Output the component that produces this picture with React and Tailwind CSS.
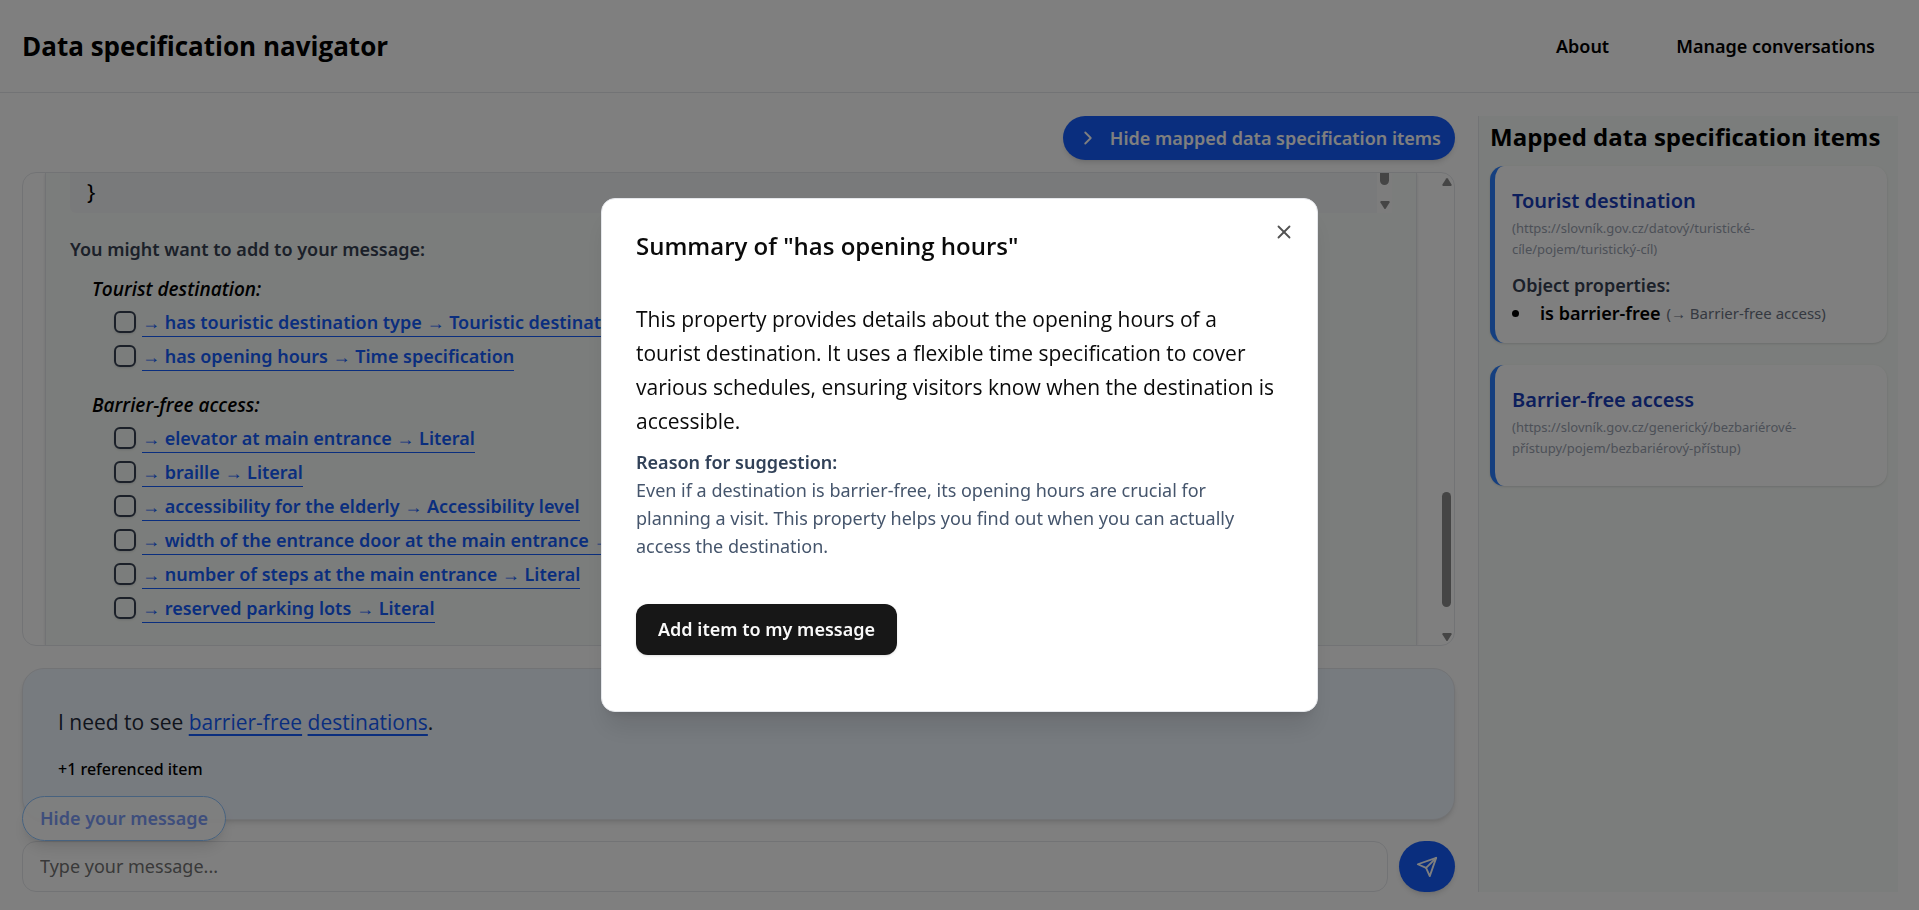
import { ChevronRight, X } from "lucide-react";

const groups = [
  {
    name: "Tourist destination:",
    items: [
      "→ has touristic destination type → Touristic destination type",
      "→ has opening hours → Time specification",
    ],
  },
  {
    name: "Barrier-free access:",
    items: [
      "→ elevator at main entrance → Literal",
      "→ braille → Literal",
      "→ accessibility for the elderly → Accessibility level",
      "→ width of the entrance door at the main entrance → Literal",
      "→ number of steps at the main entrance → Literal",
      "→ reserved parking lots → Literal",
    ],
  },
];

function Triangle({ up }) {
  return (
    <svg viewBox="0 0 10 8" className="h-2 w-[10px] fill-[#8b8b8b]" aria-hidden="true">
      <path
        d={up ? "M4.2 .6Q5 -.4 5.8 .6L9.6 6.4Q10 8 8.6 8H1.4Q0 8 .4 6.4Z" : "M4.2 7.4Q5 8.4 5.8 7.4L9.6 1.6Q10 0 8.6 0H1.4Q0 0 .4 1.6Z"}
      />
    </svg>
  );
}

function PaperPlane() {
  return (
    <svg
      viewBox="0 0 24 24"
      className="h-[22px] w-[22px] fill-none stroke-current stroke-2"
      strokeLinecap="round"
      strokeLinejoin="round"
      aria-hidden="true"
    >
      <path d="m22 2-7 20-4-9-9-4Z" />
      <path d="M22 2 11 13" />
    </svg>
  );
}

function Header() {
  return (
    <header className="flex h-[93px] shrink-0 items-center justify-between border-b border-gray-200 pl-[22px] pr-11">
      <h1 className="text-[26px] font-bold">Data specification navigator</h1>
      <nav className="flex gap-[67px] font-['Noto_Sans',sans-serif] text-[18px] font-semibold">
        <a href="#about">About</a>
        <a href="#conversations">Manage conversations</a>
      </nav>
    </header>
  );
}

function Suggestions() {
  return (
    <section className="flex min-h-0 flex-1 overflow-hidden rounded-[14px] border border-gray-200 bg-white font-['Noto_Sans',sans-serif]">
      <div className="mx-[22px] min-w-0 flex-1 border-x border-gray-200 bg-[#f7fbf8] px-6 shadow-sm">
        <div className="flex h-10">
          <pre className="flex-1 rounded-bl-md bg-[#f3f4f6] pl-[17px] pt-1 font-['Noto_Sans',sans-serif] text-[22px] leading-7">{"}"}</pre>
          <div className="flex w-[15px] flex-col items-center justify-between bg-[#fafafa] pb-1">
            <div className="h-3 w-[9px] rounded-b-full bg-[#8b8b8b]" />
            <Triangle />
          </div>
        </div>
        <p className="mt-[22px] text-[18px] font-semibold leading-7 text-gray-700">
          You might want to add to your message:
        </p>
        {groups.map((group) => (
          <div key={group.name} className="mb-[18px] mt-3 pl-[22px]">
            <h3 className="font-['Open_Sans',sans-serif] text-[19px] font-semibold italic leading-7">{group.name}</h3>
            <ul className="mt-[2px] pl-[22px]">
              {group.items.map((item) => (
                <li key={item} className="flex h-[34px] items-center gap-[6px]">
                  <input
                    type="checkbox"
                    aria-label={item}
                    className="h-[22px] w-[22px] shrink-0 appearance-none rounded-md border-2 border-gray-700 shadow-sm"
                  />
                  <a href="#item" className="whitespace-nowrap border-b border-blue-600 text-[18px] font-semibold leading-7 text-blue-600">
                    {item}
                  </a>
                </li>
              ))}
            </ul>
          </div>
        ))}
      </div>
      <div className="flex w-[15px] flex-col items-center pb-1 pt-[5px]">
        <Triangle up />
        <div className="flex-1" />
        <div className="mb-[26px] h-[115px] w-[9px] rounded-full bg-[#8b8b8b]" />
        <Triangle />
      </div>
    </section>
  );
}

function Composer() {
  return (
    <>
      <section className="relative mt-[22px] h-[152px] shrink-0 rounded-[22px] border border-gray-200 bg-[#eff6ff] px-[35px] pt-9 shadow-md">
        <p className="text-[21px] leading-[34px] text-gray-800">
          I need to see{" "}
          <a href="#barrier-free" className="text-blue-600 underline decoration-2 underline-offset-4">barrier-free</a>{" "}
          <a href="#destinations" className="text-blue-600 underline decoration-2 underline-offset-4">destinations</a>.
        </p>
        <p className="mt-4 font-['Noto_Sans',sans-serif] text-base font-medium leading-7">+1 referenced item</p>
        <button className="absolute -bottom-[22px] -left-px h-[45px] rounded-full border border-blue-300 bg-white/90 px-[17px] font-['Noto_Sans',sans-serif] text-[18px] font-semibold text-[#7c9cf8] shadow-lg">
          Hide your message
        </button>
      </section>
      <form className="mt-[21px] flex h-[51px] shrink-0 gap-[11px]">
        <input
          aria-label="Message"
          placeholder="Type your message..."
          className="min-w-0 flex-1 rounded-[14px] border border-gray-200 px-[17px] font-['Noto_Sans',sans-serif] text-[18px] placeholder:text-[#737373]"
        />
        <button type="button" aria-label="Send" className="flex w-14 items-center justify-center rounded-full bg-blue-600 text-white shadow-md">
          <PaperPlane />
        </button>
      </form>
    </>
  );
}

function Card({ title, url, children }) {
  return (
    <article className="rounded-[14px] border-l-[5px] border-blue-500 bg-white px-[17px] pb-4 pt-[18px] font-['Noto_Sans',sans-serif] shadow-sm">
      <h3 className="text-[20px] font-semibold leading-[34px] text-blue-800">{title}</h3>
      <p className="mb-[11px] text-[13px] leading-[21px] text-gray-400">{url}</p>
      {children}
    </article>
  );
}

function Sidebar() {
  return (
    <aside className="w-[420px] shrink-0 border-l border-gray-200 bg-[#f7fbf8] px-[11px] pt-1">
      <h2 className="mb-3 whitespace-nowrap text-[24px] font-bold leading-[34px]">Mapped data specification items</h2>
      <div className="flex flex-col gap-[22px]">
        <Card
          title="Tourist destination"
          url={<>(https://slovník.gov.cz/datový/turistické-<br />cíle/pojem/turistický-cíl)</>}
        >
          <h4 className="text-[18px] font-semibold leading-7 text-gray-700">Object properties:</h4>
          <ul className="leading-7">
            <li className="flex items-center">
              <span className="mr-[21px] h-[7px] w-[7px] rounded-full bg-black" />
              <span className="mr-[6px] text-[18px] font-semibold">is barrier-free</span>
              <span className="text-[15px] text-gray-500">(→ Barrier-free access)</span>
            </li>
          </ul>
        </Card>
        <Card
          title="Barrier-free access"
          url={<>(https://slovník.gov.cz/generický/bezbariérové-<br />přístupy/pojem/bezbariérový-přístup)</>}
        />
      </div>
    </aside>
  );
}

function SummaryDialog() {
  return (
    <div className="fixed inset-0 flex items-center justify-center bg-black/50">
      <div role="dialog" aria-modal="true" aria-labelledby="summary-title" className="relative w-[717px] rounded-[14px] border border-gray-200 bg-white px-[34px] pb-14 pt-[33px] text-neutral-950 shadow-xl">
        <button aria-label="Close" className="absolute right-[22px] top-[22px] text-neutral-600">
          <X className="h-[22px] w-[22px]" />
        </button>
        <h2 id="summary-title" className="text-[24px] font-semibold leading-7">Summary of "has opening hours"</h2>
        <p className="mt-[42px] text-[21px] leading-[34px]">
          This property provides details about the opening hours of a tourist destination. It uses a flexible time specification to cover various schedules, ensuring visitors know when the destination is accessible.
        </p>
        <div className="mt-[10px] font-['Noto_Sans',sans-serif] text-[18px] leading-7 text-slate-600">
          <h3 className="font-semibold text-slate-700">Reason for suggestion:</h3>
          <p>
            Even if a destination is barrier-free, its opening hours are crucial for planning a visit. This property helps you find out when you can actually access the destination.
          </p>
        </div>
        <button className="mt-11 h-[51px] rounded-xl bg-[#171717] px-[22px] font-['Noto_Sans',sans-serif] text-[18px] font-semibold text-neutral-50 shadow-sm">
          Add item to my message
        </button>
      </div>
    </div>
  );
}

export default function App() {
  return (
    <div className="flex h-screen flex-col bg-white font-['Open_Sans','Noto_Sans',sans-serif] text-black">
      <Header />
      <div className="flex min-h-0 flex-1 gap-[23px] pb-[18px] pl-[22px] pr-[21px] pt-[23px]">
        <main className="flex min-w-0 flex-1 flex-col">
          <button className="mb-3 flex h-11 shrink-0 items-center gap-[11px] self-end rounded-full bg-blue-600 px-[14px] font-['Noto_Sans',sans-serif] text-[18px] font-semibold text-white shadow-md">
            <ChevronRight className="h-[22px] w-[22px]" />
            Hide mapped data specification items
          </button>
          <Suggestions />
          <Composer />
        </main>
        <Sidebar />
      </div>
      <SummaryDialog />
    </div>
  );
}
